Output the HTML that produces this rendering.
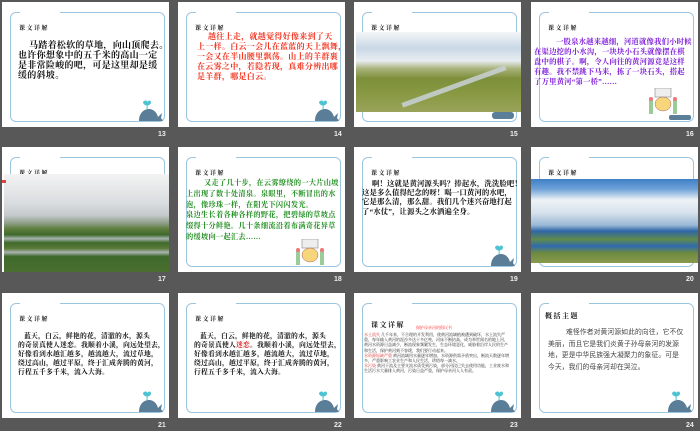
<!DOCTYPE html>
<html><head><meta charset="utf-8"><style>
*{margin:0;padding:0;box-sizing:border-box}
body{width:700px;height:431px;background:#585858;position:relative;overflow:hidden;font-family:"Liberation Serif","Noto Serif CJK SC","Noto Sans CJK SC",serif}
.s{position:absolute;width:167px;height:125px;background:#fff;overflow:hidden}
.f{position:absolute;left:8px;top:10px;width:155px;height:110px;border:1.5px solid #9cc6de;border-radius:6px}
.gap{position:absolute;left:18px;top:8px;width:40px;height:5px;background:#fff}
.t{position:absolute;left:17px;top:21px;font-size:6px;font-weight:bold;color:#222;letter-spacing:1.5px}
.b{position:absolute;white-space:nowrap;font-weight:bold;color:#111}
.n{position:absolute;font-size:7px;font-weight:bold;color:#eee;font-family:"Liberation Sans",sans-serif}
.w{position:absolute;left:135px;top:94px}
.ph{position:absolute}
</style></head><body>

<svg width="0" height="0" style="position:absolute"><defs>
<g id="wh"><path d="M6 6 c1.5-2 4-2 4.5 0 c0.5-2 3.5-2 3.5 0.5 c0 2-2.5 3-4 3 c-2 0-4-1.5-4-3.5z" fill="#4ec3d2"/><rect x="9.6" y="9" width="1" height="4" fill="#4ec3d2"/><path d="M2 25 C2 17 7 13 12 13 C17 13 20 17 21 21 L25 17 L24 22 L26 25 Z" fill="#5a7e98"/></g>
<g id="kid"><rect x="6" y="0" width="16" height="9" fill="#eee" stroke="#888" stroke-width=".6"/><ellipse cx="14" cy="16" rx="8" ry="7" fill="#f7d57a" stroke="#a66" stroke-width=".5"/><rect x="0" y="12" width="4" height="14" fill="#9c9"/><rect x="24" y="12" width="4" height="14" fill="#9c9"/><circle cx="2" cy="11" r="2" fill="#e77"/><circle cx="26" cy="11" r="2" fill="#e77"/></g>
</defs></svg>

<!-- 13 -->
<div class="s" style="left:2px;top:2px"><div class="f"></div><div class="gap"></div><div class="t">课文详解</div>
<div class="b" style="left:16px;top:38px;font-size:9px;line-height:10px;letter-spacing:.3px"><span style="padding-left:11px"></span>马踏着松软的草地，向山顶爬去。<br>也许你想象中的五千米的高山一定<br>是非常险峻的吧，可是这里却是缓<br>缓的斜坡。</div>
<svg class="w" width="28" height="28"><use href="#wh"/></svg></div>
<div class="n" style="left:158px;top:131px">13</div>

<!-- 14 -->
<div class="s" style="left:178px;top:2px"><div class="f"></div><div class="gap"></div><div class="t">课文详解</div>
<div class="b" style="left:19px;top:30px;color:#f2301c;font-size:8px;line-height:10px;letter-spacing:.3px"><span style="padding-left:11px"></span>越往上走，就越觉得好像来到了天<br>上一样。白云一会儿在蓝蓝的天上飘舞，<br>一会又在半山腰里飘荡。山上的羊群裹<br>在云雾之中，若隐若现，真难分辨出哪<br>是羊群，哪是白云。</div>
<svg class="w" width="28" height="28"><use href="#wh"/></svg></div>
<div class="n" style="left:334px;top:131px">14</div>

<!-- 15 -->
<div class="s" style="left:354px;top:2px"><div class="f"></div><div class="gap"></div><div class="t">课文详解</div>
<div class="ph" style="left:2px;top:30px;width:165px;height:80px;background:linear-gradient(180deg,#f4f6f8 0%,#c9d8e6 20%,#e8edf1 36%,#a9b27a 46%,#7d8f3a 58%,#8a9a45 80%,#9aa35a 100%)"></div>
<div class="ph" style="left:45px;top:82px;width:110px;height:5px;background:#c9d1d6;transform:rotate(-20deg);opacity:.85"></div>
<div class="ph" style="left:138px;top:110px;width:22px;height:7px;background:#5b7f99;border-radius:3px"></div></div>
<div class="n" style="left:510px;top:131px">15</div>

<!-- 16 -->
<div class="s" style="left:531px;top:2px"><div class="f"></div><div class="gap"></div><div class="t">课文详解</div>
<div class="b" style="left:3px;top:35px;color:#7b18d8;font-size:7.4px;line-height:10px;letter-spacing:.15px"><span style="padding-left:22px"></span>一股泉水越来越细，河道就像我们小时候<br>在渠边挖的小水沟，一块块小石头就像摆在棋<br>盘中的棋子。啊，令人向往的黄河源竟是这样<br>有趣。我不禁跳下马来，拣了一块石头，搭起<br>了万里黄河“第一桥”……</div>
<svg style="position:absolute;left:118px;top:86px" width="34" height="28"><use href="#kid"/></svg>
<div class="ph" style="left:138px;top:113px;width:22px;height:5px;background:#5b7f99;border-radius:2px"></div></div>
<div class="n" style="left:686px;top:131px">16</div>

<!-- 17 -->
<div class="s" style="left:2px;top:147px"><div class="f"></div><div class="gap"></div><div class="t">课文详解</div>
<div class="ph" style="left:2px;top:27px;width:165px;height:98px;background:linear-gradient(180deg,#f3f3f3 0%,#d9dcdf 30%,#c5cacc 42%,#8fa08a 50%,#5f7e3e 56%,#3f6a2c 62%,#a8b4b0 66%,#3f6a2c 70%,#5a7a3a 76%,#aab4b2 80%,#3e6a2c 84%,#4a6e30 100%)"></div>
<div class="ph" style="left:0px;top:33px;width:4px;height:3px;background:#d44"></div></div>
<div class="n" style="left:158px;top:276px">17</div>

<!-- 18 -->
<div class="s" style="left:178px;top:147px"><div class="f"></div><div class="gap"></div><div class="t">课文详解</div>
<div class="b" style="left:8px;top:31px;color:#1c8c1c;font-size:7.2px;line-height:10.8px;letter-spacing:.3px"><span style="padding-left:18px"></span>又走了几十步，在云雾缭绕的一大片山坡<br>上出现了数十处清泉。泉眼里，不断冒出的水<br>泡，像珍珠一样，在阳光下闪闪发光。<br>泉边生长着各种各样的野花，把碧绿的草坡点<br>缀得十分鲜艳。几十条细流沿着布满奇花异草<br>的缓坡向一起汇去……</div>
<svg style="position:absolute;left:118px;top:92px" width="34" height="28"><use href="#kid"/></svg></div>
<div class="n" style="left:334px;top:276px">18</div>

<!-- 19 -->
<div class="s" style="left:354px;top:147px"><div class="f"></div><div class="gap"></div><div class="t">课文详解</div>
<div class="b" style="left:8px;top:32px;font-size:7.4px;line-height:9.2px;letter-spacing:.1px"><span style="padding-left:10px"></span>啊！这就是黄河源头吗？捧起水，洗洗脸吧！<br>这是多么值得纪念的呀！喝一口黄河的水吧，<br>它是那么清，那么甜。我们几个迷兴奋地打起<br>了“水仗”，让源头之水洒遍全身。</div>
<svg class="w" width="28" height="28"><use href="#wh"/></svg></div>
<div class="n" style="left:510px;top:276px">19</div>

<!-- 20 -->
<div class="s" style="left:531px;top:147px"><div class="f"></div><div class="gap"></div><div class="t">课文详解</div>
<div class="ph" style="left:0;top:32px;width:167px;height:84px;background:linear-gradient(180deg,#3f7fc6 0%,#6ea2d8 12%,#eef2f6 25%,#d7e2ec 40%,#9ab8d6 55%,#2f66a8 62%,#5f8a4a 72%,#2f6ab0 80%,#6d8a3e 88%,#8a9a4e 100%)"></div></div>
<div class="n" style="left:686px;top:276px">20</div>

<!-- 21 -->
<div class="s" style="left:2px;top:293px"><div class="f"></div><div class="gap"></div><div class="t">课文详解</div>
<div class="b" style="left:16px;top:39px;font-size:6.8px;line-height:9px;letter-spacing:.2px"><span style="padding-left:6px"></span>蓝天，白云，鲜艳的花，清澈的水，源头<br>的奇景真使人迷恋。我顺着小溪，向远处望去，<br>好像看到水越汇越多，越流越大，流过草地，<br>绕过高山，越过平原，终于汇成奔腾的黄河，<br>行程五千多千米，流入大海。</div>
<svg class="w" width="28" height="28"><use href="#wh"/></svg></div>
<div class="n" style="left:158px;top:422px">21</div>

<!-- 22 -->
<div class="s" style="left:178px;top:293px"><div class="f"></div><div class="gap"></div><div class="t">课文详解</div>
<div class="b" style="left:16px;top:39px;font-size:6.8px;line-height:9px;letter-spacing:.2px"><span style="padding-left:6px"></span>蓝天，白云，鲜艳的花，清澈的水，源头<br>的奇景真使人<span style="color:#d22">迷恋</span>。我顺着小溪，向远处望去，<br>好像看到水越汇越多，越流越大，流过草地，<br>绕过高山，越过平原，终于汇成奔腾的黄河，<br>行程五千多千米，流入大海。</div>
<svg class="w" width="28" height="28"><use href="#wh"/></svg></div>
<div class="n" style="left:334px;top:422px">22</div>

<!-- 23 -->
<div class="s" style="left:354px;top:293px"><div class="f"></div><div class="gap"></div><div class="t" style="top:27px;font-size:7px">课文详解</div>
<div class="ph" style="left:62px;top:32px;font-size:4px;color:#f22">保护母亲河的倡议书</div>
<div style="position:absolute;top:39px;left:10px;width:146px;font-size:4px;line-height:5.2px;color:#222"><span style="color:#d22">水土流失</span> 几千年来，不合理的开发利用，使黄河流域植被遭到破坏，水土流失严重，每年输入黄河的泥沙多达十多亿吨，河床不断抬高，成为举世闻名的地上河，黄河水资源日益减少，断流现象频繁发生，生态环境恶化，威胁着沿岸人民的生产和生活，保护黄河刻不容缓，我们要行动起来。<br><span style="color:#d22">水资源短缺严重</span> 黄河流域用水量逐年增加，水资源供需矛盾突出，断流天数逐年增多，严重影响工农业生产和人民生活，珍惜每一滴水。<br><span style="color:#d22">水污染</span> 黄河干流及主要支流水质受到污染，部分河段已失去使用功能，工业废水和生活污水大量排入黄河，污染日益严重，保护母亲河人人有责。</div>
<svg class="w" width="28" height="28"><use href="#wh"/></svg></div>
<div class="n" style="left:510px;top:422px">23</div>

<!-- 24 -->
<div class="s" style="left:531px;top:293px"><div class="f"></div><div class="gap"></div><div class="t" style="top:18px;font-size:7px;left:14px">概括主题</div>
<div class="b" style="left:17px;top:34px;font-size:6.8px;line-height:11.7px;font-weight:normal;color:#444;letter-spacing:.1px;font-family:'Liberation Sans','Noto Sans CJK SC',sans-serif"><span style="padding-left:18px"></span>难怪作者对黄河源如此的向往，它不仅<br>美丽，而且它是我们炎黄子孙母亲河的发源<br>地，更是中华民族强大凝聚力的象征。可是<br>今天，我们的母亲河却在哭泣。</div>
<svg class="w" width="28" height="28"><use href="#wh"/></svg></div>
<div class="n" style="left:686px;top:422px">24</div>

</body></html>
